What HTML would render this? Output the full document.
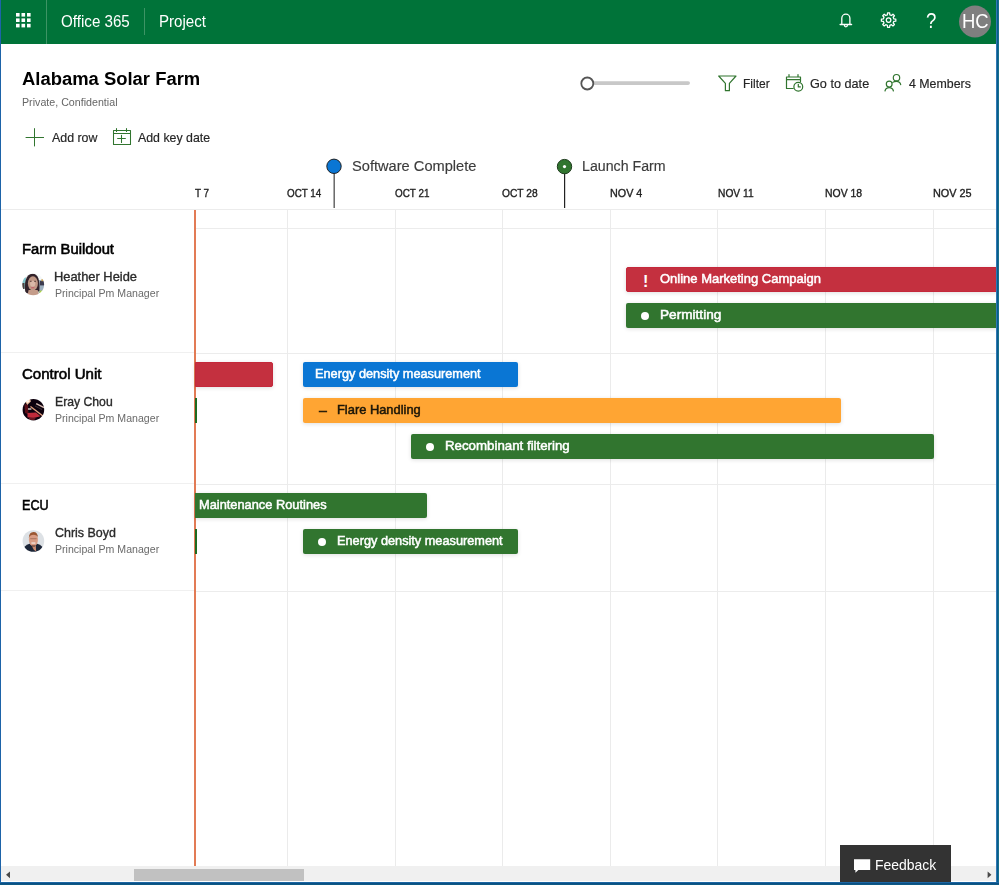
<!DOCTYPE html>
<html>
<head>
<meta charset="utf-8">
<title>Project</title>
<style>
*{box-sizing:border-box;margin:0;padding:0}
html,body{width:999px;height:885px;overflow:hidden;background:#fff}
body{font-family:"Liberation Sans",sans-serif;color:#222;position:relative}
.abs{position:absolute}
.t{position:absolute;white-space:nowrap;display:inline-block;transform-origin:0 50%;line-height:1}
#hdr{position:absolute;left:0;top:0;width:999px;height:44px;background:#007339}
.vl{position:absolute;width:1px;background:#ebebeb}
.hl{position:absolute;height:1px;background:#ececec}
.bar{position:absolute;height:25px;border-radius:2px;box-shadow:0 1px 4px rgba(0,0,0,.13)}
.red{background:#c4303f;border:1px solid #c5283b}
.grn{background:#31752f}
.blu{background:#0a76d4}
.org{background:#ffa533}
.dot{position:absolute;width:8px;height:8px;border-radius:50%;background:#fff}
</style>
</head>
<body>
<!-- header -->
<div id="hdr"></div>
<svg class="abs" style="left:0;top:0" width="999" height="44" viewBox="0 0 999 44">
  <!-- waffle -->
  <g fill="#fff">
    <rect x="16" y="13" width="3.6" height="3.6"/><rect x="21.5" y="13" width="3.6" height="3.6"/><rect x="27" y="13" width="3.6" height="3.6"/>
    <rect x="16" y="18.4" width="3.6" height="3.6"/><rect x="21.5" y="18.4" width="3.6" height="3.6"/><rect x="27" y="18.4" width="3.6" height="3.6"/>
    <rect x="16" y="23.8" width="3.6" height="3.6"/><rect x="21.5" y="23.8" width="3.6" height="3.6"/><rect x="27" y="23.8" width="3.6" height="3.6"/>
  </g>
  <rect x="46" y="0" width="1" height="44" fill="#3d9465"/>
  <rect x="144" y="8" width="1" height="27" fill="#3d9465"/>
  <!-- bell -->
  <g fill="none" stroke="#fff" stroke-width="1.3" stroke-linejoin="round" stroke-linecap="round">
    <path d="M841.8 24.4 V18.2 a4.05 4.05 0 0 1 8.1 0 V24.4 M840.1 24.5 H851.6 M844.4 25.3 a1.5 1.5 0 0 0 3 0"/>
  </g>
  <!-- gear -->
  <g id="gear" fill="none" stroke="#fff" stroke-width="1.25" stroke-linejoin="round">
    <circle cx="888.6" cy="20.1" r="2.3"/>
    <path d="M887.39 14.84 L887.55 12.88 L889.65 12.88 L889.81 14.84 L891.47 15.52 L892.96 14.25 L894.45 15.74 L893.18 17.23 L893.86 18.89 L895.82 19.05 L895.82 21.15 L893.86 21.31 L893.18 22.97 L894.45 24.46 L892.96 25.95 L891.47 24.68 L889.81 25.36 L889.65 27.32 L887.55 27.32 L887.39 25.36 L885.73 24.68 L884.24 25.95 L882.75 24.46 L884.02 22.97 L883.34 21.31 L881.38 21.15 L881.38 19.05 L883.34 18.89 L884.02 17.23 L882.75 15.74 L884.24 14.25 L885.73 15.52 Z"/>
  </g>
  <!-- avatar -->
  <circle cx="975" cy="21.5" r="16" fill="#7f7f7f"/>
</svg>
<svg class="abs" style="left:0;top:60px" width="999" height="100" viewBox="0 60 999 100">
  <!-- slider -->
  <rect x="592" y="81.3" width="98" height="3.6" rx="1.8" fill="#c8c8c8"/>
  <circle cx="587.3" cy="83.5" r="6" fill="#fff" stroke="#555" stroke-width="1.8"/>
  <g fill="none" stroke="#31752f" stroke-width="1.2" stroke-linejoin="round" stroke-linecap="round">
    <!-- filter funnel -->
    <path d="M718.7 76 H736 L729.4 83.4 V90.7 H725.4 V83.4 Z"/>
    <!-- go to date: calendar + clock -->
    <path d="M786.5 77 H800.5 V81.6 M786.5 77 V88.5 H793.2 M786.5 79.7 H800.5 M789 74.6 V77 M798 74.6 V77"/>
    <circle cx="798.3" cy="86.7" r="4.4" fill="#fff"/>
    <path d="M798.3 84.3 V86.9 H800.3"/>
    <!-- members -->
    <circle cx="896.5" cy="77.7" r="3.2"/>
    <path d="M892.8 82.4 Q894.2 81.3 896.5 81.3 Q899.9 81.3 900.7 84.6"/>
    <circle cx="889.2" cy="84.1" r="2.9"/>
    <path d="M885 91 Q885.8 87.7 889.2 87.7 Q892.6 87.7 893.4 91"/>
    <!-- add row plus -->
    <path d="M34.5 128.6 V146 M26 137.5 H43.6" stroke-width="1"/>
    <!-- add key date calendar -->
    <path d="M113.5 130.5 H130.5 V144.5 H113.5 Z M113.5 133.5 H130.5 M116.5 128.6 V131.4 M126.5 128.6 V131.4 M121.5 135.2 V142.4 M117.6 138.5 H125.4" stroke-width="1.05"/>
  </g>
</svg>
<!-- grid -->
<div class="hl" style="left:1px;top:209px;width:995px"></div>
<div class="hl" style="left:196px;top:228px;width:800px;background:#ececec"></div>
<div class="hl" style="left:1px;top:352px;width:193px;background:#f0f0f0"></div>
<div class="hl" style="left:196px;top:353px;width:800px"></div>
<div class="hl" style="left:1px;top:483px;width:193px;background:#f0f0f0"></div>
<div class="hl" style="left:196px;top:484px;width:800px"></div>
<div class="hl" style="left:1px;top:590px;width:193px;background:#f0f0f0"></div>
<div class="hl" style="left:196px;top:591px;width:800px"></div>
<div class="vl" style="left:287px;top:210px;height:656px"></div>
<div class="vl" style="left:395px;top:210px;height:656px"></div>
<div class="vl" style="left:502px;top:210px;height:656px"></div>
<div class="vl" style="left:610px;top:210px;height:656px"></div>
<div class="vl" style="left:717px;top:210px;height:656px"></div>
<div class="vl" style="left:825px;top:210px;height:656px"></div>
<div class="vl" style="left:933px;top:210px;height:656px"></div>
<!-- date labels -->
<!-- key dates -->
<svg class="abs" style="left:320px;top:155px" width="260" height="56" viewBox="320 155 260 56">
  <rect x="333.6" y="173" width="1.1" height="35" fill="#303030"/>
  <circle cx="334" cy="166.3" r="7.2" fill="#0a76d4" stroke="#222" stroke-width="1"/>
  <rect x="564" y="173" width="1.2" height="35" fill="#222"/>
  <circle cx="564.5" cy="166.6" r="7.2" fill="#31752f" stroke="#1d3a1c" stroke-width="1"/>
  <circle cx="564.5" cy="166.6" r="1.6" fill="#fff"/>
</svg>
<!-- today line -->
<div class="abs" style="left:194px;top:210px;width:2px;height:656px;background:#e27b55"></div>
<!-- avatars -->
<svg class="abs" style="left:20px;top:270px" width="28" height="290" viewBox="20 270 28 290">
  <defs>
    <clipPath id="c1"><circle cx="33.2" cy="284.4" r="10.9"/></clipPath>
    <clipPath id="c2"><circle cx="33.4" cy="409.7" r="10.8"/></clipPath>
    <clipPath id="c3"><circle cx="33.4" cy="541" r="10.8"/></clipPath>
    <filter id="bl" x="-20%" y="-20%" width="140%" height="140%"><feGaussianBlur stdDeviation="0.45"/></filter>
  </defs>
  <!-- Heather -->
  <g clip-path="url(#c1)"><g filter="url(#bl)">
    <rect x="18" y="268" width="32" height="34" fill="#f4f7f7"/>
    <rect x="21" y="277.5" width="5" height="11" fill="#86c6cc"/>
    <rect x="21.5" y="283" width="3" height="6" fill="#4a403e"/>
    <rect x="38.5" y="280" width="7" height="13" fill="#9db0c0"/>
    <rect x="40" y="281" width="5" height="4.4" fill="#3a3a50"/>
    <rect x="41.4" y="279.2" width="2.2" height="2" fill="#c8a050"/>
    <rect x="39.6" y="290.6" width="3" height="2.4" fill="#a8d040"/>
    <path d="M25.4 292.8 C24 284 25.4 273.8 32.4 273.8 C38.6 273.8 40 281 39.4 290.4 C38 292.4 36 293.4 33 293.6 C30 293.8 27 293.6 25.4 292.8 Z" fill="#33242a"/>
    <ellipse cx="32.9" cy="283.4" rx="5" ry="7.1" fill="#c09886"/>
    <ellipse cx="32.7" cy="283.8" rx="2.6" ry="3" fill="#d9b8a8"/>
    <rect x="29.8" y="280.8" width="1.8" height="0.9" fill="#4a3430"/>
    <rect x="34.2" y="280.8" width="1.8" height="0.9" fill="#4a3430"/>
    <rect x="31.2" y="287.2" width="3.2" height="1.1" fill="#c2606a"/>
    <path d="M28.6 290 H37.6 L39.4 296 H27.4 Z" fill="#c49c8a"/>
  </g></g>
  <!-- Eray -->
  <g clip-path="url(#c2)"><g filter="url(#bl)">
    <rect x="18" y="394" width="32" height="32" fill="#0c0410"/>
    <path d="M24.5 404 L28 405 L28.5 414 L25 413 Z" fill="#5a1018"/>
    <path d="M25.2 401.4 L29.6 398.6 L31 401.2 L27.2 405 Z" fill="#f0c0a0"/>
    <path d="M26.4 401.6 L29 400 L29.6 401.4 L27.4 403 Z" fill="#fff4e8"/>
    <path d="M27.5 413 L36 412.4 L40.4 416.2 L33 418.2 L27.5 417.2 Z" fill="#c02c3a"/>
    <path d="M29 417.4 L36 417.6 L34 420.4 L29 419.6 Z" fill="#6a1420"/>
    <path d="M30.5 406.4 L43.6 416.6" stroke="#e8a080" stroke-width="1.3" fill="none"/>
    <path d="M36.2 403.6 L44 407.6" stroke="#d8b8b0" stroke-width="1.4" fill="none"/>
    <path d="M35 406 L42 409.6" stroke="#3a2a30" stroke-width="1" fill="none"/>
    <rect x="28" y="408.4" width="3.4" height="1.2" fill="#fff0e8"/>
  </g></g>
  <!-- Chris -->
  <g clip-path="url(#c3)"><g filter="url(#bl)">
    <rect x="18" y="526" width="32" height="32" fill="#dde1e5"/>
    <path d="M22.6 552 Q23.6 545.4 29.6 543.8 L37.2 543.8 Q43.2 545.4 44.2 552 L44.2 556 H22.6 Z" fill="#1e2638"/>
    <ellipse cx="33.4" cy="540" rx="4.5" ry="6.2" fill="#d99c84"/>
    <path d="M28.8 538 q0.2 -6 4.7 -6 q4.3 0 4.5 5.6 q-1.2 -2.8 -4.5 -2.8 q-3.3 0 -4.7 3.2 z" fill="#9a5630"/>
    <path d="M31.6 545.6 L35.8 545.6 L36.2 551.4 L33.8 549.8 Z" fill="#c98a70"/>
    <rect x="30.2" y="538.2" width="6.4" height="1" fill="#8a5a48" opacity=".6"/>
    <rect x="31.4" y="542.4" width="4" height="1.3" fill="#f3e4de"/>
    <rect x="32" y="545.2" width="3" height="1.6" fill="#5a3a34" opacity=".7"/>
  </g></g>
</svg>
<!-- row 1 -->
<div class="bar red" style="left:626px;top:267px;width:372px;border-radius:2px 0 0 2px"></div>
<div class="bar grn" style="left:626px;top:303px;width:372px;border-radius:2px 0 0 2px"></div>
<div class="dot" style="left:641px;top:312px"></div>
<!-- row 2 -->
<div class="bar red" style="left:195px;top:362px;width:78px;border-radius:0 2px 2px 0"></div>
<div class="bar blu" style="left:303px;top:362px;width:215px"></div>
<div class="abs" style="left:195px;top:398px;width:2px;height:25px;background:#1d6a20"></div>
<div class="bar org" style="left:303px;top:398px;width:538px"></div>
<div class="bar grn" style="left:411px;top:434px;width:522.5px"></div>
<div class="dot" style="left:426px;top:443px"></div>
<!-- row 3 -->
<div class="bar grn" style="left:195px;top:493px;width:232px;border-radius:0 2px 2px 0"></div>
<div class="abs" style="left:195px;top:529px;width:2px;height:25px;background:#1d6a20"></div>
<div class="bar grn" style="left:303px;top:529px;width:215px"></div>
<div class="dot" style="left:318px;top:538px"></div>
<div class="abs" style="left:1px;top:866px;width:995px;height:15px;background:#f0f0f0"></div>
<div class="abs" style="left:134px;top:869px;width:170px;height:12px;background:#c1c1c1"></div>
<svg class="abs" style="left:0;top:867px" width="999" height="15" viewBox="0 867 999 15">
  <path d="M6 874.8 L10 871.4 V878.2 Z" fill="#484848"/>
  <path d="M991.4 874.8 L987.6 871.4 V878.2 Z" fill="#484848"/>
</svg>
<div class="abs" style="left:840px;top:845px;width:111px;height:37px;background:#333"></div>
<svg class="abs" style="left:852px;top:857px" width="22" height="18" viewBox="852 857 22 18">
  <path d="M854 859.2 H870.2 V870 H858.4 L855.4 872.8 V870 H854 Z" fill="#fff"/>
</svg>
<!-- TEXT:BEGIN -->
<span class="t" id="t_o365" style="left:60.89px;top:14.00px;font-size:15.6px;color:#fff;transform:scaleX(0.9718)">Office 365</span>
<span class="t" id="t_proj" style="left:158.62px;top:14.00px;font-size:15.6px;color:#fff;transform:scaleX(0.9686)">Project</span>
<span class="t" id="t_q" style="left:926.32px;top:10.00px;font-size:22px;color:#fff;transform:scaleX(0.8455)">?</span>
<span class="t" id="t_hc" style="left:961.86px;top:11.00px;font-size:20px;color:#fff;transform:scaleX(0.9237)">HC</span>
<span class="t" id="t_title" style="left:22.31px;top:71.00px;font-size:17.5px;color:#000;transform:scaleX(1.0531);font-weight:bold">Alabama Solar Farm</span>
<span class="t" id="t_priv" style="left:22.17px;top:97.00px;font-size:10.8px;color:#666;transform:scaleX(0.9885)">Private, Confidential</span>
<span class="t" id="t_addrow" style="left:52.00px;top:132.00px;font-size:12.8px;color:#262626;transform:scaleX(0.9679);-webkit-text-stroke:0.18px #262626">Add row</span>
<span class="t" id="t_addkey" style="left:138.40px;top:132.00px;font-size:12.8px;color:#262626;transform:scaleX(0.9650);-webkit-text-stroke:0.18px #262626">Add key date</span>
<span class="t" id="t_filter" style="left:743.36px;top:78.00px;font-size:12.8px;color:#262626;transform:scaleX(0.9386);-webkit-text-stroke:0.18px #262626">Filter</span>
<span class="t" id="t_goto" style="left:809.91px;top:78.00px;font-size:12.8px;color:#262626;transform:scaleX(0.9905);-webkit-text-stroke:0.18px #262626">Go to date</span>
<span class="t" id="t_memb" style="left:909.31px;top:78.00px;font-size:12.8px;color:#262626;transform:scaleX(0.9666);-webkit-text-stroke:0.18px #262626">4 Members</span>
<span class="t" id="t_sc" style="left:352.34px;top:159.00px;font-size:14px;color:#3c3c3c;transform:scaleX(1.0453);-webkit-text-stroke:0.15px #3c3c3c">Software Complete</span>
<span class="t" id="t_lf" style="left:582.09px;top:159.00px;font-size:14px;color:#3c3c3c;transform:scaleX(1.0141);-webkit-text-stroke:0.15px #3c3c3c">Launch Farm</span>
<span class="t" id="t_d0" style="left:194.85px;top:188.00px;font-size:11.2px;color:#222;transform:scaleX(0.8841);-webkit-text-stroke:0.35px #222">T 7</span>
<span class="t" id="t_d1" style="left:287.04px;top:188.00px;font-size:11.2px;color:#222;transform:scaleX(0.8787);-webkit-text-stroke:0.35px #222">OCT 14</span>
<span class="t" id="t_d2" style="left:394.54px;top:188.00px;font-size:11.2px;color:#222;transform:scaleX(0.8828);-webkit-text-stroke:0.35px #222">OCT 21</span>
<span class="t" id="t_d3" style="left:502.02px;top:188.00px;font-size:11.2px;color:#222;transform:scaleX(0.9155);-webkit-text-stroke:0.35px #222">OCT 28</span>
<span class="t" id="t_d4" style="left:609.91px;top:188.00px;font-size:11.2px;color:#222;transform:scaleX(0.9628);-webkit-text-stroke:0.35px #222">NOV 4</span>
<span class="t" id="t_d5" style="left:717.80px;top:188.00px;font-size:11.2px;color:#222;transform:scaleX(0.9130);-webkit-text-stroke:0.35px #222">NOV 11</span>
<span class="t" id="t_d6" style="left:824.88px;top:188.00px;font-size:11.2px;color:#222;transform:scaleX(0.9322);-webkit-text-stroke:0.35px #222">NOV 18</span>
<span class="t" id="t_d7" style="left:932.65px;top:188.00px;font-size:11.2px;color:#222;transform:scaleX(0.9712);-webkit-text-stroke:0.35px #222">NOV 25</span>
<span class="t" id="t_r1t" style="left:22.10px;top:242.00px;font-size:14px;color:#000;transform:scaleX(1.0552);-webkit-text-stroke:0.55px #000">Farm Buildout</span>
<span class="t" id="t_r2t" style="left:22.49px;top:367.00px;font-size:14px;color:#000;transform:scaleX(1.0749);-webkit-text-stroke:0.55px #000">Control Unit</span>
<span class="t" id="t_r3t" style="left:22.22px;top:498.00px;font-size:14px;color:#000;transform:scaleX(0.9004);-webkit-text-stroke:0.55px #000">ECU</span>
<span class="t" id="t_r1n" style="left:54.49px;top:271.00px;font-size:12.6px;color:#2b2b2b;transform:scaleX(1.0219);-webkit-text-stroke:0.35px #2b2b2b">Heather Heide</span>
<span class="t" id="t_r2n" style="left:54.55px;top:396.00px;font-size:12.6px;color:#2b2b2b;transform:scaleX(0.9699);-webkit-text-stroke:0.35px #2b2b2b">Eray Chou</span>
<span class="t" id="t_r3n" style="left:54.72px;top:527.00px;font-size:12.6px;color:#2b2b2b;transform:scaleX(0.9897);-webkit-text-stroke:0.35px #2b2b2b">Chris Boyd</span>
<span class="t" id="t_r1s" style="left:54.67px;top:288.00px;font-size:10.8px;color:#6a6a6a;transform:scaleX(0.9806)">Principal Pm Manager</span>
<span class="t" id="t_r2s" style="left:54.67px;top:413.00px;font-size:10.8px;color:#6a6a6a;transform:scaleX(0.9806)">Principal Pm Manager</span>
<span class="t" id="t_r3s" style="left:54.67px;top:544.00px;font-size:10.8px;color:#6a6a6a;transform:scaleX(0.9806)">Principal Pm Manager</span>
<span class="t" id="t_b1x" style="left:642.90px;top:274.00px;font-size:16px;color:#fff;transform:scaleX(1.0000);font-weight:bold">!</span>
<span class="t" id="t_b1" style="left:660.39px;top:273.00px;font-size:12.8px;color:#fff;transform:scaleX(1.0153);-webkit-text-stroke:0.5px #fff">Online Marketing Campaign</span>
<span class="t" id="t_b2" style="left:659.94px;top:309.00px;font-size:12.8px;color:#fff;transform:scaleX(1.0644);-webkit-text-stroke:0.5px #fff">Permitting</span>
<span class="t" id="t_b3" style="left:314.75px;top:368.00px;font-size:12.8px;color:#fff;transform:scaleX(0.9953);-webkit-text-stroke:0.5px #fff">Energy density measurement</span>
<span class="t" id="t_b4d" style="left:318.75px;top:405.00px;font-size:12.8px;color:#1c1608;transform:scaleX(1.1111);-webkit-text-stroke:0.4px #1c1608">–</span>
<span class="t" id="t_b4" style="left:336.99px;top:404.00px;font-size:12.8px;color:#1c1608;transform:scaleX(1.0058);-webkit-text-stroke:0.5px #1c1608">Flare Handling</span>
<span class="t" id="t_b5" style="left:444.96px;top:440.00px;font-size:12.8px;color:#fff;transform:scaleX(1.0378);-webkit-text-stroke:0.5px #fff">Recombinant filtering</span>
<span class="t" id="t_b6" style="left:198.80px;top:499.00px;font-size:12.8px;color:#fff;transform:scaleX(1.0018);-webkit-text-stroke:0.5px #fff">Maintenance Routines</span>
<span class="t" id="t_b7" style="left:336.90px;top:535.00px;font-size:12.8px;color:#fff;transform:scaleX(0.9950);-webkit-text-stroke:0.5px #fff">Energy density measurement</span>
<span class="t" id="t_fb" style="left:875.11px;top:858.00px;font-size:14.2px;color:#fff;transform:scaleX(0.9842)">Feedback</span>
<!-- TEXT:END -->
<!-- window borders -->
<div class="abs" style="left:0;top:0;width:1px;height:885px;background:#1d63a8"></div>
<div class="abs" style="left:996px;top:0;width:3px;height:885px;background:linear-gradient(90deg,#2f79b3 0,#2f79b3 33.3%,#0a5a8e 33.3%,#0a5a8e 66.6%,#17708c 66.6%)"></div>
<div class="abs" style="left:0;top:882px;width:999px;height:3px;background:linear-gradient(180deg,#1c66a2 0,#1c66a2 33.3%,#0a4f85 33.3%,#0a4f85 66.6%,#0e5a84 66.6%)"></div>
</body>
</html>
